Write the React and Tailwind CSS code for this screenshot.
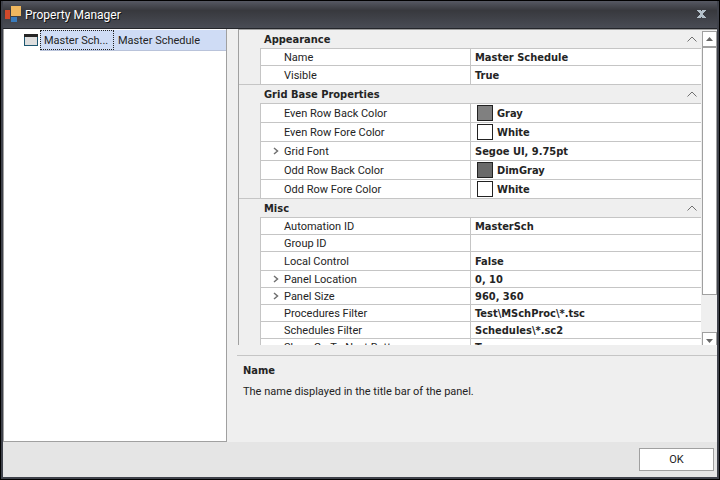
const groups = [
  {
    title: 'Appearance',
    rows: [
      { label: 'Name', value: 'Master Schedule', height: 'h-[17px]' },
      { label: 'Visible', value: 'True', height: 'h-[19px]' },
    ],
  },
  {
    title: 'Grid Base Properties',
    rows: [
      { label: 'Even Row Back Color', value: 'Gray', swatch: 'bg-[#808080]', height: 'h-[19px]' },
      { label: 'Even Row Fore Color', value: 'White', swatch: 'bg-white', height: 'h-[19px]' },
      { label: 'Grid Font', value: 'Segoe UI, 9.75pt', expandable: true, height: 'h-[19px]' },
      { label: 'Odd Row Back Color', value: 'DimGray', swatch: 'bg-[#696969]', height: 'h-[19px]' },
      { label: 'Odd Row Fore Color', value: 'White', swatch: 'bg-white', height: 'h-[19px]' },
    ],
  },
  {
    title: 'Misc',
    rows: [
      { label: 'Automation ID', value: 'MasterSch', height: 'h-[17px]' },
      { label: 'Group ID', value: '', height: 'h-[17px]' },
      { label: 'Local Control', value: 'False', height: 'h-[19px]' },
      { label: 'Panel Location', value: '0, 10', expandable: true, height: 'h-[17px]' },
      { label: 'Panel Size', value: '960, 360', expandable: true, height: 'h-[17px]' },
      { label: 'Procedures Filter', value: 'Test\\MSchProc\\*.tsc', height: 'h-[17px]' },
      { label: 'Schedules Filter', value: 'Schedules\\*.sc2', height: 'h-[17px]' },
      { label: 'Show Go To Next Button', value: 'True', height: 'h-[17px]' },
    ],
  },
];

function TitleBar() {
  return (
    <header className="flex h-7 shrink-0 items-center border-b border-[#24262b] bg-linear-to-b from-[#565963] via-[#38393e] via-35% to-[#494c55] pr-2 pb-px pl-[2px]">
      <svg className="mr-1 h-4 w-4 shrink-0" viewBox="0 0 16 16" shapeRendering="crispEdges" aria-hidden="true">
        <rect x="0" y="4" width="5" height="9" fill="#d0492b" />
        <rect x="6" y="0" width="10" height="10" fill="#efb75f" />
        <rect x="6" y="11" width="6" height="5" fill="#3a7cbd" />
      </svg>
      <h1 className="flex-1 pt-px text-[12px] leading-4 text-white [text-shadow:1px_1px_0_#111]">Property Manager</h1>
      <button type="button" aria-label="Close" className="flex h-4 w-4 items-center justify-center">
        <svg width="9" height="8" viewBox="0 0 9 8" shapeRendering="crispEdges" aria-hidden="true">
          <path
            d="M0 0h4v1h1v-1h4v1h-1v1h-1v1h-1v2h1v1h1v1h1v1h-4v-1h-1v1h-4v-1h1v-1h1v-1h1v-2h-1v-1h-1v-1h-1z"
            fill="#b4c0ca"
          />
        </svg>
      </button>
    </header>
  );
}

function ItemList() {
  return (
    <section aria-label="Items" className="w-56 shrink-0 border-r border-b border-l border-[#a0a0a0] bg-white pt-px">
      <div className="ml-5 flex h-[21px] items-center">
        <svg className="mt-1 mr-[2px] h-3 w-[14px] shrink-0 self-start" viewBox="0 0 14 12" shapeRendering="crispEdges" aria-hidden="true">
          <rect width="14" height="12" fill="#1d566f" />
          <rect width="14" height="3" fill="#262626" />
          <rect x="1" y="3" width="12" height="8" fill="#dedede" />
        </svg>
        <div className="flex h-full min-w-0 flex-1 items-center border-b border-[#b9c3da] bg-[#cfdcf5]">
          <span className="w-[74px] border border-dotted border-[#222] px-[3px] pt-px leading-[17px]">Master Sch...</span>
          <span className="pt-px pl-1 leading-[17px]">Master Schedule</span>
        </div>
      </div>
    </section>
  );
}

function PropertyRow({ row, last }) {
  return (
    <tr className={row.height}>
      <td className={last ? 'border-b border-[#c5c5c5] p-0' : 'p-0'} />
      <th scope="row" className="border-b border-l border-[#c5c5c5] bg-white p-0 text-left font-normal">
        <div className="flex items-center">
          <span className="flex w-[23px] shrink-0 items-center pl-3">
            {row.expandable && (
              <button type="button" aria-label={`Expand ${row.label}`} className="block">
                <svg width="6" height="8" viewBox="0 0 6 8" aria-hidden="true">
                  <path d="M1 1l3.5 3L1 7" fill="none" stroke="#707070" strokeWidth="1.5" />
                </svg>
              </button>
            )}
          </span>
          <span className="pt-px leading-[15px]">{row.label}</span>
        </div>
      </th>
      <td className="border-b border-l border-[#c5c5c5] bg-white p-0 pl-1 font-['DejaVu_Sans_Condensed',sans-serif] font-bold">
        <div className="flex items-center">
          {row.swatch && <span className={`mr-1 ml-[2px] h-4 w-4 shrink-0 border border-[#222] ${row.swatch}`} />}
          <span className="pt-px leading-[15px]">{row.value}</span>
        </div>
      </td>
    </tr>
  );
}

function PropertyGroup({ group }) {
  return (
    <tbody>
      <tr className="h-[19px]">
        <td className="p-0" />
        <th
          scope="rowgroup"
          colSpan={2}
          className="border-b border-[#c5c5c5] p-0 pr-1 pl-1 text-left font-['DejaVu_Sans_Condensed',sans-serif] font-bold"
        >
          <div className="flex items-center justify-between">
            <span className="pt-px leading-[15px]">{group.title}</span>
            <button type="button" aria-label={`Collapse ${group.title}`}>
              <svg width="10" height="6" viewBox="0 0 10 6" aria-hidden="true">
                <path d="M.5 5.5L5 1l4.500 4.500" fill="none" stroke="#707070" />
              </svg>
            </button>
          </div>
        </th>
      </tr>
      {group.rows.map((row, i) => (
        <PropertyRow key={row.label} row={row} last={i === group.rows.length - 1} />
      ))}
    </tbody>
  );
}

function ScrollBar() {
  return (
    <div className="mt-px flex w-[15px] shrink-0 flex-col">
      <button type="button" aria-label="Scroll up" className="flex h-4 shrink-0 items-center justify-center border border-[#a0a0a0] bg-white">
        <svg width="7" height="4" viewBox="0 0 7 4" aria-hidden="true">
          <path d="M0 4L3.500 0L7 4z" fill="#666" />
        </svg>
      </button>
      <div className="min-h-0 flex-1">
        <div className="h-[87%] border border-[#a0a0a0] bg-white" />
      </div>
      <button type="button" aria-label="Scroll down" className="flex h-[13px] shrink-0 items-center justify-center border border-b-0 border-[#a0a0a0] bg-white pt-1">
        <svg width="7" height="4" viewBox="0 0 7 4" aria-hidden="true">
          <path d="M0 0L3.500 4L7 0z" fill="#666" />
        </svg>
      </button>
    </div>
  );
}

export default function App() {
  return (
    <div className="h-screen bg-black p-px font-[Roboto,sans-serif] text-[11px] leading-4 text-[#242424]">
      <div className="flex h-full flex-col border-2 border-t-0 border-[#3f424b] bg-[#efefef]">
        <TitleBar />
        <main className="flex min-h-0 flex-1">
          <ItemList />
          <section aria-label="Properties" className="ml-[10px] flex min-w-0 flex-1 flex-col">
            <div className="ml-px flex min-h-0 flex-1 border-t border-l border-[#a0a0a0]">
              <div className="mr-px min-w-0 flex-1 overflow-hidden">
                <table className="w-full table-fixed border-separate border-spacing-0">
                  <colgroup>
                    <col className="w-[21px]" />
                    <col className="w-[210px]" />
                    <col />
                  </colgroup>
                  {groups.map((group) => (
                    <PropertyGroup key={group.title} group={group} />
                  ))}
                </table>
              </div>
              <ScrollBar />
            </div>
            <div className="mt-[10px] h-[87px] shrink-0 border-t border-[#c5c5c5] px-[6px] pt-[7px]">
              <h2 className="font-['DejaVu_Sans_Condensed',sans-serif] font-bold">Name</h2>
              <p className="mt-[5px]">The name displayed in the title bar of the panel.</p>
            </div>
          </section>
        </main>
        <footer className="flex h-[35px] shrink-0 items-center justify-end bg-[#e5e5e5] pr-[3px]">
          <button type="button" className="h-[23px] w-[75px] border border-[#a0a0a0] bg-white pt-px">OK</button>
        </footer>
      </div>
    </div>
  );
}
